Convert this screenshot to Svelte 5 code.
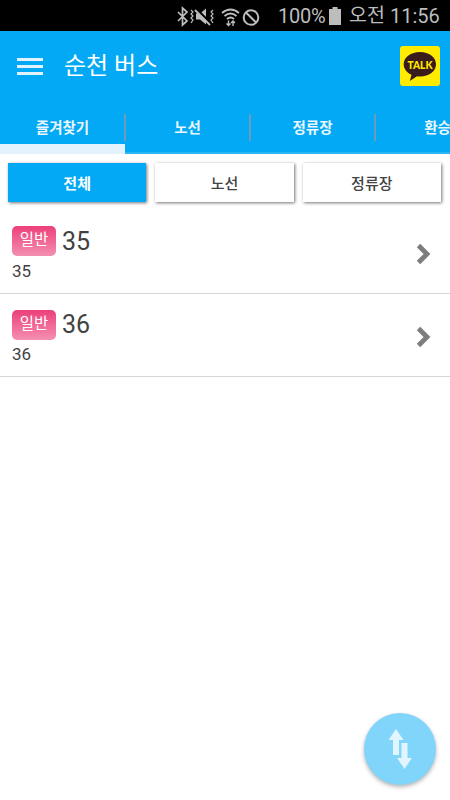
<script lang="ts">
	interface Route {
		type: string;
		name: string;
		description: string;
	}

	const tabs = ['즐겨찾기', '노선', '정류장', '환승'];
	const filters = ['전체', '노선', '정류장'];
	const routes: Route[] = [
		{ type: '일반', name: '35', description: '35' },
		{ type: '일반', name: '36', description: '36' }
	];

	let activeTab = $state(0);
	let activeFilter = $state(0);
</script>

<div class="app">
	<div class="status-bar">
		<svg class="status-icons" viewBox="0 0 92 24" fill="none" stroke="#bdbdbd">
			<!-- bluetooth -->
			<path d="M2 8l9 9-4.5 4V4L11 8l-9 9" stroke-width="1.7" />
			<!-- vibrate / mute -->
			<path d="M20 9.5h4l6-5v16l-6-5h-4z" fill="#bdbdbd" stroke="none" />
			<path d="M20 5l15 15" stroke="#000" stroke-width="3" />
			<path d="M19 6l15 15" stroke-width="1.8" />
			<path d="M15 6l2 2-2 2 2 2-2 2 2 2-2 3M37 6l-2 2 2 2-2 2 2 2-2 2 2 3" stroke-width="1.2" />
			<!-- wifi -->
			<path d="M46 9q8.500-7 17 0M48.500 12q6-5 12 0M51 15q3.500-3 7 0" stroke-width="1.8" />
			<path d="M52.500 16.500v5M50.500 19.500l2 2 2-2M57 22v-5M55 19l2-2 2 2" stroke-width="1.4" />
			<!-- blocked -->
			<circle cx="75" cy="13.500" r="7.300" stroke-width="2" />
			<path d="M70 8.500l10 10" stroke-width="2" />
		</svg>
		<span class="battery-level">100%</span>
		<svg class="battery-icon" viewBox="0 0 12 18">
			<path d="M3.500 0h5v2H12v16H0V2h3.500z" fill="#bdbdbd" />
		</svg>
		<span class="period">오전</span>
		<span class="clock">11:56</span>
	</div>

	<header class="header">
		<div class="toolbar">
			<button class="menu-button" aria-label="메뉴">
				<span class="menu-line"></span>
				<span class="menu-line"></span>
				<span class="menu-line"></span>
			</button>
			<h1 class="title">순천 버스</h1>
			<button class="talk-button" aria-label="카카오톡">
				<svg viewBox="0 0 40 40">
					<path
						d="M20 6C11 6 3.700 11.200 3.700 18.200c0 4.700 3.200 8.500 7.800 10.500L9.800 35l7.200-4.700c1 .2 2 .2 3 .2 9 0 16-5.300 16-12.300S29 6 20 6z"
						fill="#391b1b"
					/>
					<text x="20" y="22.500" text-anchor="middle" textLength="25" lengthAdjust="spacingAndGlyphs">TALK</text>
				</svg>
			</button>
		</div>
		<nav class="tabs">
			{#each tabs as tab, i}
				<button class="tab" class:active={activeTab === i} onclick={() => (activeTab = i)}>{tab}</button>
			{/each}
		</nav>
	</header>

	<div class="filters">
		{#each filters as filter, i}
			<button class="filter" class:active={activeFilter === i} onclick={() => (activeFilter = i)}>
				{filter}
			</button>
		{/each}
	</div>

	<div class="route-list">
		{#each routes as route}
			<div class="route">
				<div class="route-info">
					<div class="route-heading">
						<span class="route-type">{route.type}</span>
						<span class="route-name">{route.name}</span>
					</div>
					<div class="route-description">{route.description}</div>
				</div>
				<svg class="chevron" viewBox="0 0 16 22">
					<path d="M2.500 2.500l8.500 8.500-8.500 8.500" fill="none" stroke="#7d7d7d" stroke-width="4.800" />
				</svg>
			</div>
		{/each}
	</div>

	<button class="sort-button" aria-label="정렬">
		<svg viewBox="0 0 24 40">
			<path d="M8 0l7.500 11H11v15H5V11H.5z" />
			<path d="M13.500 14h6v15H24l-7.500 11L9 29h4.500z" />
		</svg>
	</button>
</div>

<style>
	:global(body) {
		margin: 0;
		background: #fff;
	}

	.app {
		position: relative;
		width: 450px;
		height: 800px;
		overflow: hidden;
		background: #fff;
		color: #424242;
		font-family: Roboto, 'Noto Sans CJK KR', sans-serif;
	}

	button {
		margin: 0;
		padding: 0;
		border: 0;
		background: none;
		color: inherit;
		font-family: inherit;
	}

	.status-bar {
		display: flex;
		align-items: center;
		box-sizing: border-box;
		height: 31px;
		padding: 1px 0 0 176px;
		background: #000;
		color: #bdbdbd;
		font-size: 20px;
		line-height: 30px;
		white-space: nowrap;
	}

	.status-icons {
		flex-shrink: 0;
		width: 92px;
		height: 24px;
	}

	.battery-level {
		width: 48px;
		margin-left: 10px;
		letter-spacing: -0.2px;
	}

	.battery-icon {
		width: 12px;
		height: 18px;
		margin-left: 3px;
	}

	.period {
		width: 35px;
		margin-left: 8px;
		font-size: 19.5px;
	}

	.clock {
		margin-left: 6px;
	}

	.header {
		box-sizing: border-box;
		height: 123px;
		background: #03a9f4;
		color: #fff;
	}

	.toolbar {
		display: flex;
		align-items: center;
		height: 70px;
		padding: 0 10px 0 17px;
	}

	.menu-button {
		display: flex;
		flex-direction: column;
		gap: 4px;
		width: 26px;
	}

	.menu-line {
		height: 3px;
		background: #e3f2fd;
	}

	.title {
		flex: 1;
		margin: 0 0 0 21px;
		font-size: 24px;
		font-weight: 400;
		line-height: 36px;
	}

	.talk-button {
		width: 40px;
		height: 40px;
		border-radius: 3px;
		background: #ffeb00;
	}

	.talk-button svg {
		display: block;
	}

	.talk-button text {
		fill: #ffeb00;
		font-family: Lato, sans-serif;
		font-size: 11px;
		font-weight: 900;
	}

	.tabs {
		display: flex;
		height: 53px;
		overflow: hidden;
	}

	.tab {
		position: relative;
		flex: 0 0 125px;
		box-sizing: border-box;
		height: 53px;
		padding-bottom: 0;
		border-bottom: 2px solid #29b6f6;
		font-size: 14.5px;
		font-weight: 700;
		color: #e9f6fe;
	}

	.tab::before {
		content: '';
		position: absolute;
		top: 13px;
		right: -1px;
		width: 2px;
		height: 27px;
		background: #6d9bbd;
	}

	.tab.active::after {
		content: '';
		position: absolute;
		bottom: -2px;
		left: 0;
		width: 125px;
		height: 10px;
		background: #e3f2fd;
	}

	.filters {
		display: flex;
		gap: 9px;
		padding: 9px 9px 8px 8px;
	}

	.filter {
		flex: 1;
		height: 39px;
		background: #fff;
		box-shadow: 1px 1px 3px rgba(0, 0, 0, 0.55);
		font-size: 15px;
		font-weight: 500;
	}

	.filter.active {
		background: #03a9f4;
		color: #fff;
		font-weight: 700;
	}

	.route {
		display: flex;
		align-items: center;
		justify-content: space-between;
		box-sizing: border-box;
		height: 83.5px;
		padding: 5px 18px 0 12px;
		border-bottom: 1px solid #d6d6d6;
	}

	.route-heading {
		display: flex;
		align-items: center;
		height: 31px;
	}

	.route-type {
		width: 44px;
		height: 30px;
		border-radius: 5px;
		background: linear-gradient(#ec407a, #f48fb1);
		color: #fff;
		font-size: 15.5px;
		line-height: 28px;
		text-align: center;
	}

	.route-name {
		margin-left: 6px;
		font-size: 25px;
		line-height: 31px;
	}

	.route-description {
		margin-top: 3px;
		font-size: 17px;
		line-height: 22px;
	}

	.chevron {
		width: 16px;
		height: 22px;
	}

	.sort-button {
		position: absolute;
		right: 14px;
		bottom: 15px;
		width: 72px;
		height: 72px;
		border-radius: 50%;
		background: #81d4fa;
		box-shadow: 0 2px 4px rgba(0, 0, 0, 0.3);
	}

	.sort-button svg {
		display: block;
		width: 24px;
		height: 40px;
		margin: 0 auto;
		fill: #e1f5fe;
	}
</style>
